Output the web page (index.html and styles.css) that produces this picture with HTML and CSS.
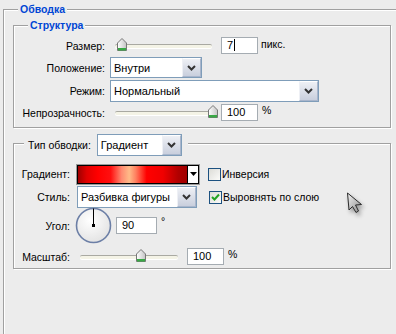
FILE: index.html
```html
<!DOCTYPE html>
<html lang="ru">
<head>
  <meta charset="UTF-8">
  <title>Обводка</title>
  <link rel="stylesheet" href="styles.css">
</head>
<body>
  <div class="group outer">
    <div class="title t-outer">Обводка</div>

    <div class="group box struct">
      <div class="title t-struct">Структура</div>

      <div class="row r1">
        <span class="lbl">Размер:</span>
        <div class="slider">
          <span class="track"></span>
          <svg class="thumb" style="left: 7px" width="10" height="13" viewBox="0 0 10 13">
            <defs>
              <linearGradient id="tg" x1="0" y1="0" x2="1" y2="0">
                <stop offset="0" stop-color="#ffffff"/>
                <stop offset="1" stop-color="#c4c4c4"/>
              </linearGradient>
            </defs>
            <path d="M0.5 5 L5 0.5 L9.5 5 V12.5 H0.5 Z" fill="url(#tg)" stroke="#777"/>
            <rect x="1" y="10" width="8" height="2.5" fill="#39a845"/>
          </svg>
        </div>
        <span class="field">7<span class="caret"></span></span>
        <span class="unit">пикс.</span>
      </div>

      <div class="row r2">
        <span class="lbl">Положение:</span>
        <div class="select s-pos">
          <span class="val">Внутри</span>
          <span class="btn"><svg width="9" height="6" viewBox="0 0 9 6"><polyline points="1,1 4.5,4.5 8,1" fill="none" stroke="#333" stroke-width="2"/></svg></span>
        </div>
      </div>

      <div class="row r3">
        <span class="lbl">Режим:</span>
        <div class="select s-mode">
          <span class="val">Нормальный</span>
          <span class="btn"><svg width="9" height="6" viewBox="0 0 9 6"><polyline points="1,1 4.5,4.5 8,1" fill="none" stroke="#333" stroke-width="2"/></svg></span>
        </div>
      </div>

      <div class="row r4">
        <span class="lbl">Непрозрачность:</span>
        <div class="slider">
          <span class="track"></span>
          <svg class="thumb" style="left: 98px" width="10" height="13" viewBox="0 0 10 13">
            <path d="M0.5 5 L5 0.5 L9.5 5 V12.5 H0.5 Z" fill="url(#tg)" stroke="#777"/>
            <rect x="1" y="10" width="8" height="2.5" fill="#39a845"/>
          </svg>
        </div>
        <span class="field">100</span>
        <span class="unit pct">%</span>
      </div>
    </div>

    <div class="group box fill">
      <div class="type">
        <span class="type-lbl">Тип обводки:</span>
        <span class="select s-type">
          <span class="val">Градиент</span>
          <span class="btn"><svg width="9" height="6" viewBox="0 0 9 6"><polyline points="1,1 4.5,4.5 8,1" fill="none" stroke="#333" stroke-width="2"/></svg></span>
        </span>
      </div>

      <div class="row g1">
        <span class="lbl">Градиент:</span>
        <div class="gradient">
          <span class="ramp"></span>
          <span class="drop"><svg width="7" height="4" viewBox="0 0 7 4"><path d="M0 0 H7 L3.5 4 Z" fill="#000"/></svg></span>
        </div>
        <span class="check c-inv"></span>
        <span class="check-lbl">Инверсия</span>
      </div>

      <div class="row g2">
        <span class="lbl">Стиль:</span>
        <div class="select s-style">
          <span class="val">Разбивка фигуры</span>
          <span class="btn"><svg width="9" height="6" viewBox="0 0 9 6"><polyline points="1,1 4.5,4.5 8,1" fill="none" stroke="#333" stroke-width="2"/></svg></span>
        </div>
        <span class="check c-align"><svg width="11" height="11" viewBox="0 0 11 11"><path d="M2 5 L4.5 7.5 L9 2.5" fill="none" stroke="#22a322" stroke-width="2"/></svg></span>
        <span class="check-lbl">Выровнять по слою</span>
      </div>

      <div class="row g3">
        <span class="lbl">Угол:</span>
        <svg class="dial" width="37" height="37" viewBox="0 0 37 37">
          <defs>
            <radialGradient id="dg" cx="0.4" cy="0.35" r="0.7">
              <stop offset="0" stop-color="#ffffff"/>
              <stop offset="1" stop-color="#e2e2e2"/>
            </radialGradient>
          </defs>
          <circle cx="18.5" cy="18.5" r="17" fill="url(#dg)" stroke="#6c7fa6" stroke-width="1.6"/>
          <line x1="18.5" y1="18.5" x2="18.5" y2="1.5" stroke="#000" stroke-width="1"/>
          <rect x="17" y="17" width="3" height="3" fill="#000"/>
        </svg>
        <span class="field f-angle">90</span>
        <span class="deg">°</span>
      </div>

      <div class="row g4">
        <span class="lbl">Масштаб:</span>
        <div class="slider s-scale">
          <span class="track"></span>
          <svg class="thumb" style="left: 59px" width="10" height="13" viewBox="0 0 10 13">
            <path d="M0.5 5 L5 0.5 L9.5 5 V12.5 H0.5 Z" fill="url(#tg)" stroke="#777"/>
            <rect x="1" y="10" width="8" height="2.5" fill="#39a845"/>
          </svg>
        </div>
        <span class="field f-scale">100</span>
        <span class="unit pct">%</span>
      </div>
    </div>
  </div>

  <svg class="cursor" width="22" height="26" viewBox="0 0 22 26">
    <defs>
      <linearGradient id="cg" x1="0" y1="0" x2="1" y2="1">
        <stop offset="0" stop-color="#f4f4f4"/>
        <stop offset="1" stop-color="#8a8a8a"/>
      </linearGradient>
    </defs>
    <path d="M1.5 1 L3 18 L6.5 14.5 L10 20.5 L12.5 19 L9.5 13 L15.5 12.5 Z" fill="url(#cg)" stroke="#2a2a2a" stroke-width="1" stroke-linejoin="round"/>
  </svg>
</body>
</html>
```

FILE: styles.css
```css
* {
  box-sizing: border-box;
}

html, body {
  margin: 0;
  padding: 0;
  overflow: hidden;
}

body {
  width: 396px;
  height: 334px;
  background: #ececec;
  font-family: "Liberation Sans", Arial, sans-serif;
  font-size: 10.5px;
  color: #000;
  position: relative;
}

/* etched group boxes */
.group {
  position: relative;
  border: 1px solid #a0a0a0;
  box-shadow: inset 1px 1px 0 #fff, 1px 1px 0 #fff;
}

.outer {
  margin: 9px 0 0 3px;
  width: 393px;
  height: 325px;
  border-right: none;
  border-bottom: none;
  box-shadow: inset 1px 1px 0 #fff;
  padding: 15px 0 0 9px;
}

.title {
  position: absolute;
  top: -7px;
  font-weight: bold;
  color: #0046d5;
  line-height: 13px;
  padding: 0 2px;
  background: #ececec;
}

.t-outer {
  left: 14px;
}

.t-struct {
  left: 14px;
}

.box {
  width: 378px;
}

.struct {
  padding: 11px 0 6px 0;
}

.row {
  display: flex;
  align-items: center;
}

.lbl {
  text-align: right;
  flex: none;
}

.struct .lbl {
  width: 91px;
  margin-right: 5px;
}

.r1 { height: 17px; }
.r2 { height: 21px; margin-top: 3px; }
.r3 { height: 22px; margin-top: 2px; }
.r4 { height: 17px; margin-top: 2px; }

/* slider */
.slider {
  position: relative;
  width: 104px;
  height: 17px;
  flex: none;
  display: flex;
  align-items: center;
}

.track {
  display: block;
  margin-left: 5px;
  width: 97px;
  height: 4px;
  background: #f4f3e6;
  border-top: 1px solid #a9a9a2;
  border-radius: 2px;
  box-shadow: 0 1px 0 #fff;
}

.thumb {
  position: absolute;
  top: 1px;
}

.field {
  flex: none;
  height: 17px;
  background: #fff;
  border: 1px solid #a5acb2;
  line-height: 15px;
  padding-left: 5px;
  font-size: 11px;
}

.struct .field {
  width: 37px;
  margin-left: 7px;
}

.caret {
  display: inline-block;
  width: 1px;
  height: 12px;
  background: #000;
  vertical-align: -2px;
  margin-left: 1px;
}

.unit {
  margin-left: 3px;
  align-self: flex-start;
  line-height: 15px;
}

.pct {
  margin-left: 4px;
  line-height: 13px;
}

/* combo boxes */
.select {
  display: flex;
  align-items: stretch;
  background: #fff;
  border: 1px solid #7f9db9;
  flex: none;
}

.select .val {
  flex: 1;
  padding-left: 3px;
  display: flex;
  align-items: center;
  font-size: 11px;
}

.select .btn {
  width: 19px;
  display: flex;
  align-items: center;
  justify-content: center;
  background: linear-gradient(#eef0f5, #c9cfdd);
  border: 1px solid #a9b6cc;
  border-top-color: #fff;
  border-left-color: #eef0f5;
}

.s-pos { width: 92px; height: 21px; }
.s-mode { width: 209px; height: 22px; }
.s-type { width: 85px; height: 22px; margin-left: 6px; }
.s-style { width: 120px; height: 22px; }

/* fill section */
.fill {
  margin-top: 15px;
  padding: 21px 0 3px 0;
}

.type {
  position: absolute;
  top: -10px;
  left: 10px;
  display: flex;
  align-items: center;
  padding: 0 6px 0 4px;
  background: #ececec;
}

.fill .lbl {
  width: 56px;
  margin-right: 7px;
}

.g1 { height: 18px; }
.g2 { height: 22px; margin-top: 3px; }
.g3 { height: 37px; margin-top: -1px; }
.g4 { height: 17px; margin-top: 4px; }

.gradient {
  flex: none;
  width: 122px;
  height: 19px;
  display: flex;
  border: 1px solid #000;
  outline: 1px solid #9a9a9a;
}

.ramp {
  flex: 1;
  background: linear-gradient(to right,
    #a00000 0%, #e00000 8%, #ff0000 18%, #ff1010 30%, #ff8a70 40%,
    #ffbb88 47%, #ff8060 53%, #ff0000 63%, #f00000 78%, #b00000 92%, #a00000 100%);
}

.drop {
  width: 11px;
  background: #fff;
  border-left: 1px solid #000;
  display: flex;
  align-items: center;
  justify-content: center;
}

.check {
  flex: none;
  width: 13px;
  height: 13px;
  border: 1px solid #1c5180;
  background: linear-gradient(135deg, #dcdcd7, #fbfbf9);
  display: flex;
  align-items: center;
  justify-content: center;
}

.c-inv {
  margin-left: 9px;
}

.c-align {
  margin-left: 12px;
}

.check-lbl {
  margin-left: 1px;
}

.dial {
  flex: none;
  margin-left: -2px;
}

.f-angle {
  width: 41px;
  margin-left: 4px;
}

.deg {
  margin-left: 4px;
  align-self: flex-start;
  margin-top: 8px;
}

.s-scale {
  width: 104px;
}

.s-scale .track {
  margin-left: 3px;
  width: 98px;
}

.f-scale {
  width: 37px;
  margin-left: 6px;
}

.cursor {
  position: absolute;
  left: 346px;
  top: 192px;
  filter: drop-shadow(2px 3px 2px rgba(0, 0, 0, 0.35));
}
```
